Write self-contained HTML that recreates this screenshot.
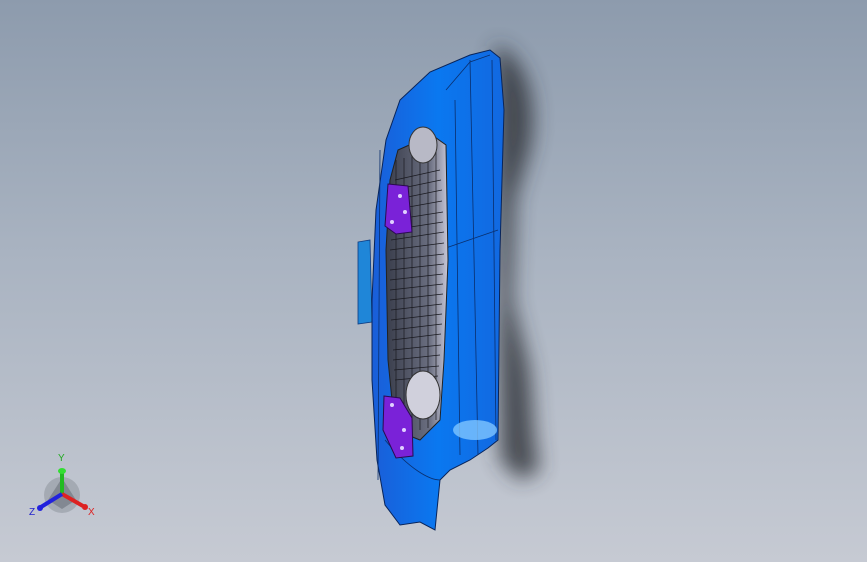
<!DOCTYPE html><html><head><style>
html,body{margin:0;padding:0}
body{width:867px;height:562px;overflow:hidden;background:linear-gradient(180deg,#8d9bad 0%,#a9b3c1 45%,#c6cad3 100%);position:relative;font-family:"Liberation Sans",sans-serif}
svg{position:absolute;left:0;top:0}
</style></head><body>
<svg width="867" height="562" viewBox="0 0 867 562">
<defs>
<filter id="b" x="-50%" y="-50%" width="200%" height="200%"><feGaussianBlur stdDeviation="10"/></filter>
<linearGradient id="bl" x1="0" x2="1" y1="0" y2="0"><stop offset="0" stop-color="#1a5ed8"/><stop offset="0.5" stop-color="#0a78f0"/><stop offset="1" stop-color="#1268e0"/></linearGradient>
<linearGradient id="gr" x1="0" x2="1"><stop offset="0" stop-color="#3a3e4c"/><stop offset="0.7" stop-color="#6a6e80"/><stop offset="1" stop-color="#c8c8d8"/></linearGradient>
</defs>
<g filter="url(#b)" fill="#2e3138" opacity="0.8">
<path d="M495 45 C525 55 540 100 530 150 L515 200 L512 300 L525 350 C535 380 530 420 540 470 L520 480 L500 460 L495 60 Z"/>
</g>
<path d="M358 242 L370 240 L372 322 L358 324 Z" fill="#1f86d8" stroke="#0d3a80" stroke-width="0.8"/>
<path d="M490 50 L500 58 L504 110 L500 250 L498 440 L488 448 L470 460 L450 470 L440 480 L435 530 L420 522 L400 525 L385 505 L377 460 L372 380 L372 300 L376 210 L386 140 L400 100 L430 72 L470 55 Z" fill="url(#bl)" stroke="#08245a" stroke-width="1"/>
<path d="M446 90 L470 62 L490 55 M455 100 L460 455 M470 60 L478 455 M492 60 L496 440 M440 250 L498 230 M385 440 C410 470 430 480 440 480 M380 150 L378 480" stroke="#0a2f6e" stroke-width="0.8" fill="none"/>
<path d="M398 150 L432 135 L446 145 L448 260 L444 360 L440 420 L420 440 L395 430 L388 360 L386 250 L390 180 Z" fill="url(#gr)" stroke="#222" stroke-width="1"/>
<g stroke="#1a1a20" stroke-width="0.7" fill="none">
<path d="M395 180 L440 170 M393 190 L441 180 M393 200 L442 190 M392 210 L442 201 M392 220 L443 212 M391 230 L443 222 M391 240 L444 232 M390 250 L444 243 M390 260 L444 254 M390 270 L444 264 M390 280 L443 274 M390 290 L443 284 M390 300 L443 294 M391 310 L442 304 M391 320 L442 314 M392 330 L442 324 M392 340 L441 334 M393 350 L441 345 M393 360 L440 355 M394 370 L439 366 M395 380 L438 376"/>
<path d="M396 160 L396 425 M404 158 L404 425 M412 155 L412 428 M420 150 L420 430 M428 147 L428 428 M436 145 L436 420"/>
</g>
<ellipse cx="423" cy="145" rx="14" ry="18" fill="#b8b9c6" stroke="#333"/>
<ellipse cx="423" cy="395" rx="17" ry="24" fill="#d0d0dc" stroke="#333"/>
<ellipse cx="475" cy="430" rx="22" ry="10" fill="#7fc6ff" opacity="0.8"/>
<path d="M388 184 L408 186 L412 232 L396 234 L385 226 Z" fill="#7a22d8" stroke="#2a0a50"/>
<path d="M384 396 L400 398 L412 418 L413 456 L396 458 L383 430 Z" fill="#7a22d8" stroke="#2a0a50"/>
<g fill="#e0d0ff"><circle cx="400" cy="196" r="2"/><circle cx="405" cy="212" r="2"/><circle cx="392" cy="222" r="2"/><circle cx="392" cy="405" r="2"/><circle cx="404" cy="430" r="2"/><circle cx="402" cy="448" r="2"/></g>
<circle cx="62" cy="495" r="18" fill="#8a8f98" opacity="0.5"/>
<path d="M62 478 L76 500 L62 509 L48 500 Z" fill="#606670" opacity="0.5"/>
<line x1="62" y1="494" x2="62" y2="472" stroke="#22bb22" stroke-width="4"/>
<ellipse cx="62" cy="471" rx="4" ry="3" fill="#33dd33"/>
<line x1="62" y1="494" x2="83" y2="506" stroke="#dd2222" stroke-width="4"/>
<circle cx="85" cy="507" r="3" fill="#dd2222"/>
<line x1="62" y1="494" x2="41" y2="507" stroke="#2222dd" stroke-width="4"/>
<circle cx="40" cy="508" r="3" fill="#2222dd"/>
<text x="58" y="461" font-size="10" fill="#22aa22" font-family="Liberation Sans">Y</text>
<text x="88" y="515" font-size="10" fill="#dd2222" font-family="Liberation Sans">X</text>
<text x="29" y="515" font-size="10" fill="#2222cc" font-family="Liberation Sans">Z</text>
</svg>
</body></html>
